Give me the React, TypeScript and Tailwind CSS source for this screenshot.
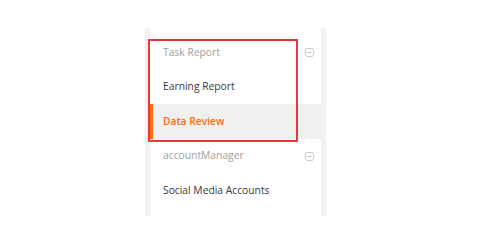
import React from "react";

function MinusBox() {
  return (
    <svg width="9" height="9" viewBox="0 0 9 9" className="block">
      <rect x="0.5" y="0.5" width="8" height="8" rx="2" fill="none" stroke="#c8c8c8" strokeWidth="1" />
      <line x1="2.5" y1="4.5" x2="6.5" y2="4.5" stroke="#c8c8c8" strokeWidth="1" />
    </svg>
  );
}

export default function App() {
  const font = { fontFamily: '"Open Sans", "Noto Sans", sans-serif' };
  return (
    <div className="w-[480px] h-[242px] bg-white pt-[28px] pl-[145px]" style={font}>
      <div className="relative w-[181px] border-l-[5px] border-r-[5px] border-[#f1f1f1] pt-[7px] pb-[8px] text-[10.3px]">
        <div className="h-[35px] flex items-center justify-between pl-[13px] pr-[7px] text-[#a0a0a0]">
          <span>Task Report</span>
          <MinusBox />
        </div>
        <div className="h-[34px] flex items-center pl-[13px] text-[#3a3a3a]">
          <span>Earning Report</span>
        </div>
        <div className="h-[35px] flex items-center pl-[13px] text-[#ff6a13] font-semibold bg-[#f0f0f0] border-l-[3px] border-[#ff6a13]">
          <span className="-ml-[3px]">Data Review</span>
        </div>
        <div className="h-[34px] flex items-center justify-between pl-[13px] pr-[7px] text-[#a0a0a0]">
          <span>accountManager</span>
          <MinusBox />
        </div>
        <div className="h-[35px] flex items-center pl-[13px] text-[#3a3a3a]">
          <span>Social Media Accounts</span>
        </div>
        <div className="absolute left-[-2px] top-[11px] w-[150px] h-[103px] border-2 border-[#e8383d] pointer-events-none" />
      </div>
    </div>
  );
}
